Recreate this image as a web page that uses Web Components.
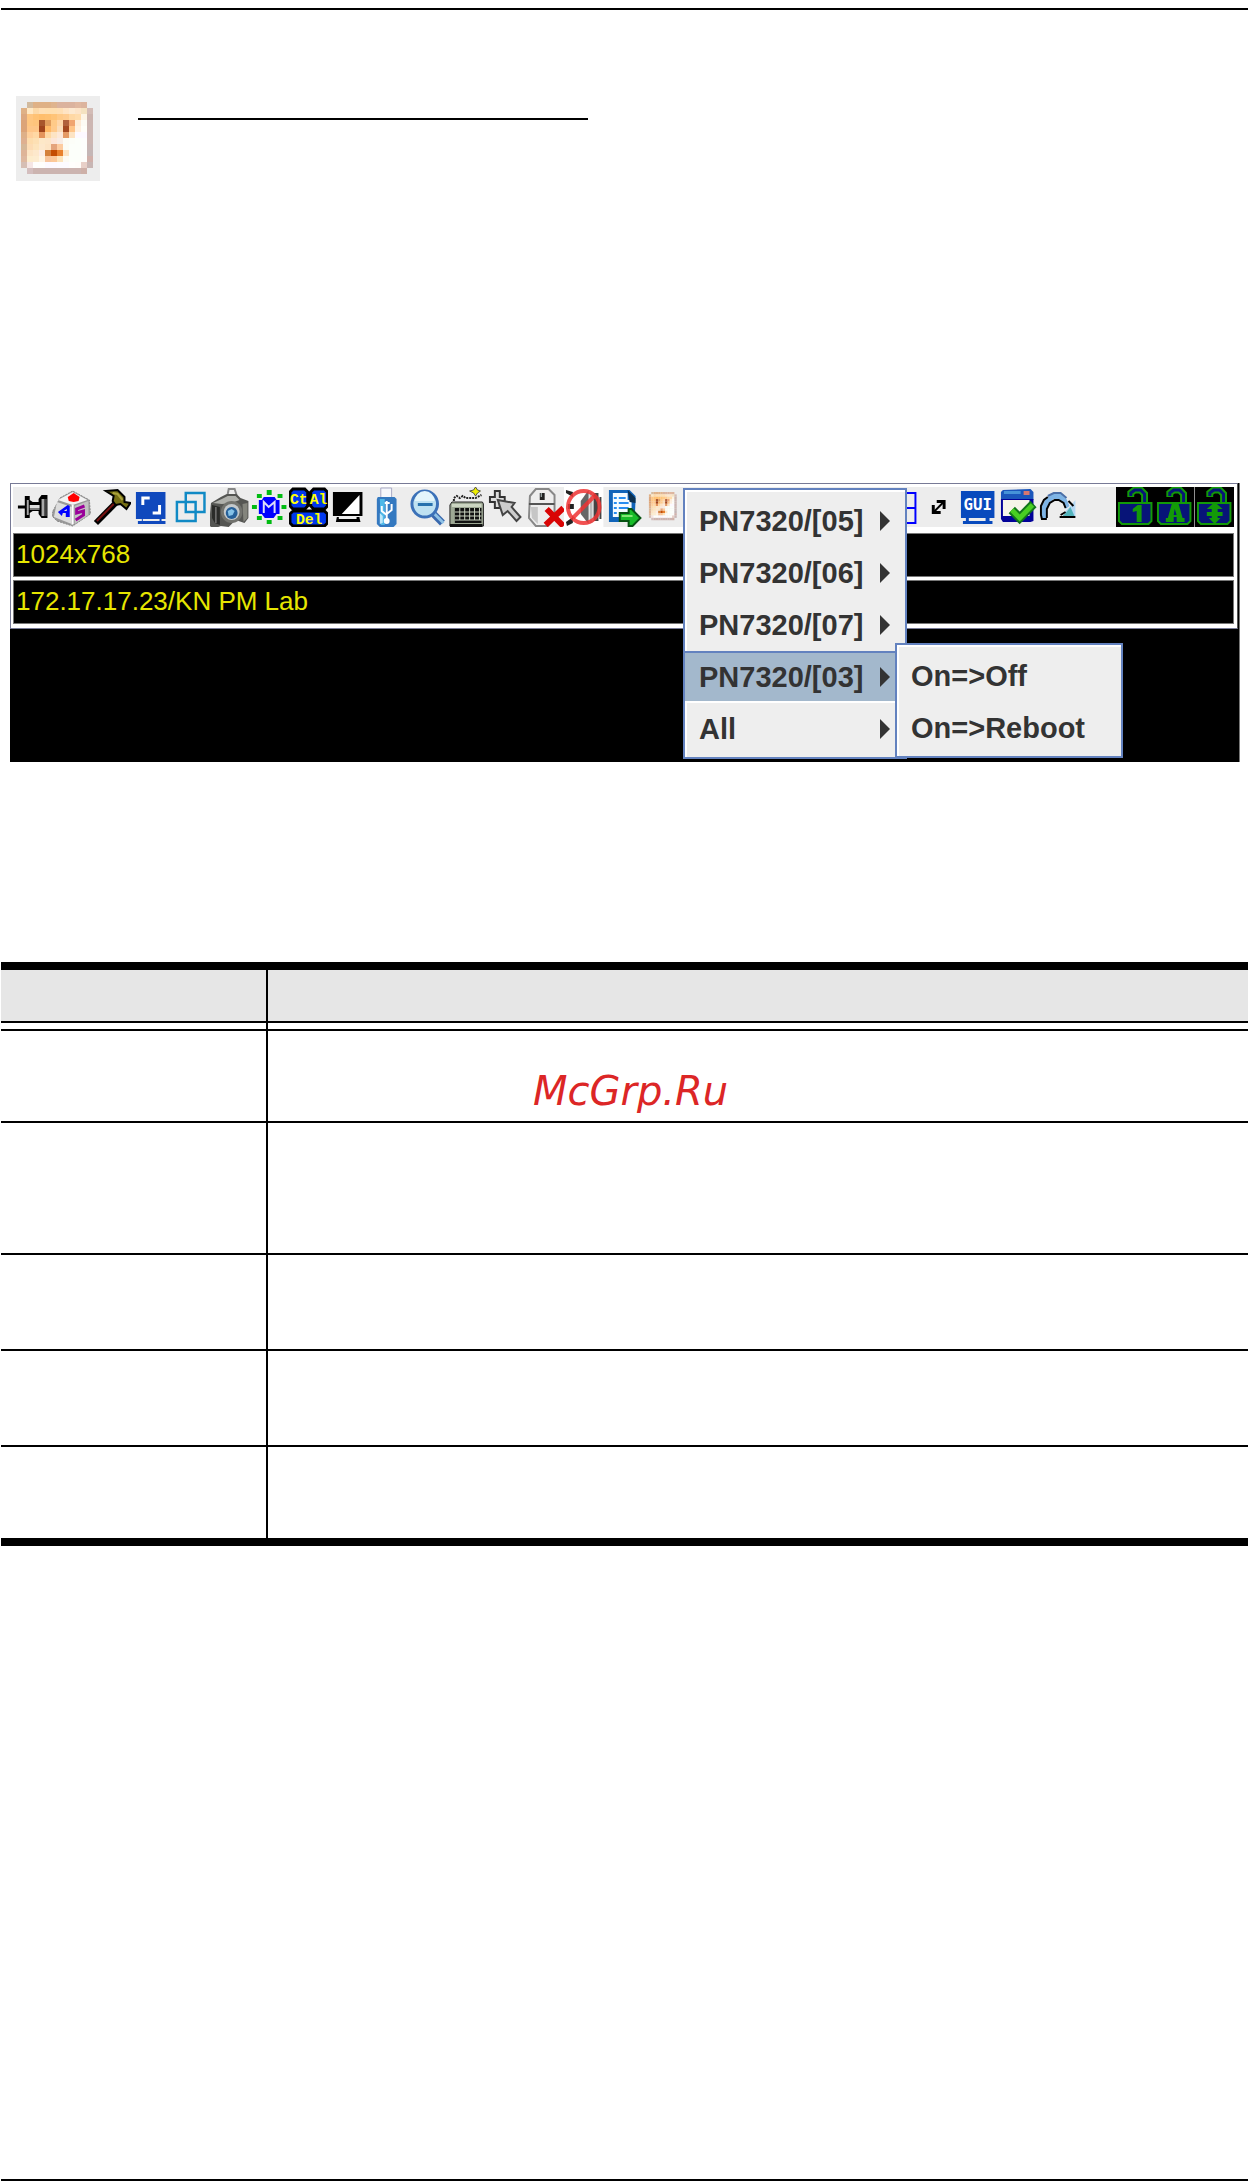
<!DOCTYPE html>
<html lang="en">
<head>
<meta charset="utf-8">
<title>Power outlet menu</title>
<style>
  body {
    margin: 0;
    background: #fff;
    font-family: "Liberation Sans", Arial, sans-serif;
  }
</style>
</head>
<body>
<manual-page></manual-page>

<script>
// 12 x 12 colour grid of the outlet icon, '' is transparent
const OUTLET = [
  ' d2ba9e dfb186 dfb186 dfb186 dfb48e dbb39e dbb39e dbb39e e0b8a0 dcb49e ',
  'dfb186 ffe8c4 fcd9a8 ffdfb4 ffdfb0 ffdfb0 ffdfb4 ffe4c4 fde9d0 fde4c8 f4e2c0 d3bcb6',
  'dca880 ffc680 ffc274 ffbe6c ffc070 ffc478 ffca88 ffcc90 ffd8a4 ffdcac fdf4e4 ccb4ae',
  'dca478 ffc680 ffc47c a8562c e09c5c ffca88 ffd6a8 b0603c f0a470 feecd8 fdfbf4 ccb6b2',
  'dca478 ffc688 ffc688 a0441c ffb866 ffca8c fbdcb8 a44820 ffc488 fff0e0 fffef8 ccb6b2',
  'deb088 ffd09c ffd8a4 e4945c ffd8a4 fde4c4 fde8d8 e49a64 fde4c4 fdf9ff fdf9ff ccb6b2',
  'deb090 fddcac fde0b4 fde8c8 fde6c8 fde6d8 f8ece4 fcfcf4 fcfef8 fcfffa fdfefc ccb6b2',
  'd6b898 fddcb4 fde4bc fde8cc fde4c4 e4a47c fdcca0 fcfcf4 fcfffa fcfffa fdfefc c8b6b4',
  'deb498 fde4c4 fde8cc fdece4 d4803c c44c00 e8802c fde4c4 fcfffa fcfffa fdfefc c4b6b6',
  'deb8a0 fdeccc fdecd0 fff4e4 f8c49c fcc898 fde4bc fdfbf4 fcfffa fcfffa fdfefc d0b0aa',
  'd6beb4 f6e6e4 fffefc fffefc fdf9ff fdf9ff fdfbff fdfbff fffefc fffdfa e8d0c8 c8b6b4',
  ' d4bebe ccb4b0 ccb4b0 ccb4b0 ccb4b0 ccb4b0 ccb4b0 ccb4b0 ccb4b0 ceb0a8 '
]

const outletCells = OUTLET.map((row, y) => row.split(' ').map((color, x) =>
  color ? `<rect x="${x}" y="${y}" width="1.02" height="1.02" fill="#${color}"/>` : ''
).join('')).join('')

const lock = (mark) => `
  <path fill="#000" d="M0 0h40v40H0z"/>
  <path fill="none" stroke="#139a08" stroke-width="7" d="M15 10V6l4-3h6l4 4v11"/>
  <path fill="none" stroke="#071478" stroke-width="3" d="M15 9V6l4-3h6l4 4v11"/>
  <path fill="#071478" stroke="#139a08" stroke-width="2" d="M3 16h33v18l-3 3H6l-3-3z"/>
  <g fill="#139a08">${mark}</g>
`

const ICONS = {
  pin: `
    <path stroke="#000" stroke-width="3" d="M5 20h9"/>
    <path fill="#000" d="M12 9h5v4l3 2h6v-3l3-4h6v23h-6l-3-4v-3h-6l-3 2v5h-5z"/>
    <path fill="#a8a8a8" d="M14 13h2v15h-2zM29 12h3v17h-3z"/>
    <path fill="#ddd" d="M17 18h10v3H17z"/>
    <path fill="#777" d="M17 21h10v2H17zM33 12h1v17h-1z"/>`,
  cube: `
    <path fill="#999" stroke="#888" stroke-dasharray="2 1" d="M1 24 8 11 21 4l17 9 1 14-18 12-16-5-5-5z"/>
    <path fill="#f2f2f2" d="m6 13 15-8 15 8-15 5z"/>
    <path fill="#ddd" d="m5 15 15 5v17L2 30z"/>
    <path fill="#fff" d="M20 18v20l2-1V18z"/>
    <path fill="#c3c3c3" d="m23 19 14-5v14l-14 9z"/>
    <path fill="#f00" d="m16 10 6-4 6 4-1 4-5 1-5-1z"/>
    <path fill="#00f" fill-rule="evenodd" d="m6 25 10-7 2 1v11h-4v-4h-3l-1 3zm6-1h3v-2z"/>
    <path fill="none" stroke="#909" stroke-width="3" d="m33 19-8 3v4l7-2v4l-8 5"/>`,
  hammer: `
    <path stroke="#000" stroke-width="6" d="M4 36 26 14"/>
    <path stroke="#711" stroke-width="2" d="M5 34 25 14"/>
    <path fill="#756e13" stroke="#000" stroke-width="2" d="m14 4 12-1 7 7v5l6 1-4 6-6-5-5 1-3-4 1-5z"/>
    <path stroke="#aaa23b" stroke-width="2" d="m21 6 5 1 5 6"/>`,
  fullscreen: `
    <path fill="#1049bd" d="M5 5h30v27h-4v2h4v3H7v-3h4v-2H5z"/>
    <path fill="#ececec" d="M12 32h17v2H12z"/>
    <path fill="none" stroke="#fff" stroke-width="3" d="M12 18v-7h7M22 26h7v-8"/>`,
  windows: `
    <path fill="none" stroke="#118ac5" stroke-width="2.5" d="M15 6h19v19H15zM6 15h19v19H6z"/>`,
  camera: `
    <path fill="none" stroke="#888" stroke-width="2" d="m18 7 1-5h6l2 6"/>
    <path fill="#555653" d="m1 16 10-6 6-3h10l4 4 8 3v17l-4 5-9-3-7 7-8-1-8 3-4-4z"/>
    <path fill="#afb0ab" d="m3 16 9-4 6-3h8l4 4-8 3-10 1z"/>
    <path fill="#2a2b29" d="m2 18 8 2v18l-5-2-3-5z"/>
    <path fill="#84857d" d="m33 17 5-1v15l-4 4z"/>
    <path stroke="#999" d="M6 20v16"/>
    <circle cx="22" cy="25" r="11" fill="#72736e"/>
    <circle cx="22" cy="25" r="8" fill="#c4c9cc"/>
    <circle cx="22" cy="26" r="6" fill="#266099"/>
    <path fill="#85c2e8" d="m18 24 4-2 3 2-2 4-4 1z"/>`,
  macro: `
    <path fill="#0b1" d="M18 3h5v5h-5zM29 7h5v4h-5zM33 18h5v4h-5zM29 29h5v4h-5zM18 33h5v4h-5zM8 29h5v4H8zM3 18h5v4H3zM8 7h5v4H8z"/>
    <path fill="#00f" d="M15 10h11l2 3h3v14h-3l-3 4h-9l-3-4h-3V13h3z"/>
    <path fill="none" stroke="#dcdcf8" stroke-width="2" d="M15 26V15l5 5 6-5v11"/>`,
  ctrlAltDel: `
    <path fill="#0038ee" stroke="#000" stroke-width="3" d="M4 2h12l3 3v14l-3 3H4l-3-3V5zM25 2h11l3 3v14l-3 3H25l-3-3V5zM4 24h32l3 3v9l-3 3H4l-3-3v-9z"/>
    <g fill="#ff0" font-family="Liberation Mono, monospace" font-weight="bold" font-size="15">
      <text x="1" y="17">Ct</text>
      <text x="21" y="17">Al</text>
      <text x="7" y="37">Del</text>
    </g>`,
  contrast: `
    <path fill="#000" d="M5 5h30v24H5zM9 30h23v1l1 4H8z"/>
    <path fill="#fff" d="M32 8v19H14z"/>
    <path fill="#eee" d="M11 30h18v2H11z"/>`,
  usb: `
    <path fill="#f5f7fb" stroke="#a8a9c5" d="M14 1h11v10H14z"/>
    <path fill="#3479c0" d="M11 10h17l2 2v25l-3 3H13l-3-3V12z"/>
    <path fill="#4eb8e8" d="M13 12h5v26h-4z"/>
    <path fill="#bde8fa" d="m13 26 3 3v7l-3 1z"/>
    <path fill="none" stroke="#fff" stroke-width="2" d="M20 14v21M15 19v5l5 4M25 17v6l-5 4M18 16h5"/>
    <circle cx="20" cy="34" r="3" fill="#fff"/>`,
  zoom: `
    <path stroke="#3968ad" stroke-width="7" d="m27 27 9 9"/>
    <path stroke="#8fc2e6" stroke-width="3" d="m27 26 10 10"/>
    <circle cx="18" cy="17" r="13" fill="#bfe2f2" stroke="#3b71b8" stroke-width="3"/>
    <path fill="#e4f5fb" d="M8 14a10 10 0 0 1 20 0z"/>
    <path fill="#2872ad" d="M11 16h15v3H11z"/>`,
  keyboard: `
    <path fill="none" stroke="#222" stroke-width="2" stroke-dasharray="2 1" d="M8 14V11l3-2 3 2 3-2 3 2h10l6-3"/>
    <path fill="#9da894" stroke="#222" d="M6 15h31l1 2v22H4V18z"/>
    <path fill="#ccd5c2" d="M6 17h30v3H6z"/>
    <path fill="#111" d="M9 21h27v15H9zM4 37h33v3H4z"/>
    <path stroke="#ccd5c2" d="M9 25h27M9 29h27M9 33h27M14 21v12M19 21v12M24 21v12M29 21v12M34 21v12"/>
    <path fill="#ee0" stroke="#554" d="m30 0 2 3 3 1-3 2-2 3-2-3-4-2 4-1z"/>`,
  pointer: `
    <path fill="#ddd" stroke="#333" stroke-width="2" d="M9 4h5v6h5v5h-5v6H9v-6H4v-5h5z"/>
    <path fill="#ccc" stroke="#444" stroke-width="2" d="m12 13 17 3-3 4 9 10-4 4-9-10-5 4z"/>`,
  mouse: `
    <path fill="#eee" stroke="#888" stroke-width="2" d="m5 9 6-7h13l6 6v23l-7 8H11l-7-8z"/>
    <path fill="#c6c6c6" d="M6 20h7v17l-6-6z"/>
    <path stroke="#555" stroke-width="2" d="M4 17h26"/>
    <path fill="#222" d="M15 6h5v7h-5z"/>
    <path fill="#bcc" d="M16 6h1v4h-1z"/>
    <path stroke="#d90505" stroke-width="6" d="m22 22 17 17M39 21 21 38"/>`,
  muted: `
    <path fill="#fff" d="M0 0h40v40H0z"/>
    <path fill="#222" d="m2 3 7 2v5L2 6zM4 17h6v5H4zM2 35l7-5v6l-6 3z"/>
    <path fill="#666" d="m17 14 8-11v34l-8-10z"/>
    <path fill="#bbb" d="M26 5h3v31h-3z"/>
    <path fill="#444" d="M30 6h5v28h-5zM36 10h2v22h-2z"/>
    <circle cx="20" cy="20" r="16" fill="none" stroke="#e33" stroke-opacity=".85" stroke-width="4"/>
    <path stroke="#e33" stroke-opacity=".85" stroke-width="4" d="M31 9 9 31"/>`,
  exportList: `
    <path fill="#1164b9" d="M5 3h21l6 6v5l-1 21H5z"/>
    <path fill="#f4fbff" d="M9 6h15v7h4v17H9z"/>
    <path fill="#0d304f" d="m24 3 8 8v5l-6-1z"/>
    <path stroke="#278df0" stroke-width="2" d="M10 11h3M15 11h7M10 16h3M15 16h10M10 21h3M15 21h10M10 26h3"/>
    <path fill="#17bc28" stroke="#075313" stroke-width="2" d="M16 26h9v-4h3l9 9-8 8h-4v-5h-9z"/>
    <path stroke="#84e875" stroke-width="2" d="M18 29h11"/>`,
  outlet: `<g transform="translate(6 5) scale(2.35)">${outletCells}</g>`,
  panels: `<path fill="none" stroke="#00f" stroke-width="2" d="M3 6h33v30H3zM3 21h33M20 6v30"/>`,
  resize: `
    <path stroke="#000" stroke-width="2" d="m15 25 10-10"/>
    <path fill="#000" d="M18 13h9v9h-3v-6h-6zM13 18h3v6h6v3h-9z"/>`,
  gui: `
    <path fill="#084abd" d="M3 4h34v27h-5v3h3v3H5v-3h3v-3H3z"/>
    <path fill="#ececec" d="M11 31h17v3H11z"/>
    <text x="20" y="23" fill="#fff" font-family="DejaVu Sans Mono, monospace" font-size="16" font-weight="bold" text-anchor="middle">GUI</text>`,
  confirm: `
    <path fill="#1b56bb" d="m5 3 28-1 3 3v8H3V5z"/>
    <path fill="#4693d8" d="M6 4h17v3H6z"/>
    <path fill="#d87770" d="M26 4h6v4h-6z"/>
    <path fill="#020299" d="M3 12h33v22l-3 1H5l-2-3z"/>
    <path fill="#f5f4e9" d="M5 13h27v16H5z"/>
    <path fill="none" stroke="#11751b" stroke-width="9" d="m14 23 8 8 14-14"/>
    <path fill="none" stroke="#48cf22" stroke-width="5" d="m14 23 8 8 13-13"/>`,
  redo: `
    <path fill="#b4d8f4" d="M39 13v16h-6l-5-4 6-6z"/>
    <path fill="#7eb4e5" d="M5 31V19l4-7 7-5h8l6 5 3 7-4 3-3-6-5-4h-4l-5 4-2 5v10z"/>
    <path fill="none" stroke="#000" stroke-width="2" d="M10 32H5l-1-4v-9l3-6 4-3M10 31v-9l3-6 5-3h4l5 3 2 5"/>
    <path stroke="#4a6fa8" stroke-width="2" d="m11 9 6-3h7l6 5"/>
    <path fill="#54b4bc" d="m34 20 4 9H26l4-4z"/>
    <path fill="none" stroke="#000" stroke-width="2" d="M23 30h16M24 28l5-3M32 14l5 5"/>`,
  numLock: lock('<path d="M17 22l5-4h4v17h-5V24l-4 1z"/>'),
  capsLock: lock('<path fill-rule="evenodd" d="M17 17h7l4 14h2v4h-8v-5h-3v5h-8v-4h2zm3 5-1 6h3z"/>'),
  scrollLock: lock('<path d="m20 15 8 7h-5v3h5v4h-5v2h3l-6 6-6-6h3v-2h-5v-4h5v-3h-5z"/>')
}

// order of the cells along the bar, an empty name leaves a blank cell
const TOOLS = [
  'pin', 'cube', 'hammer', 'fullscreen', 'windows', 'camera', 'macro', 'ctrlAltDel',
  'contrast', 'usb', 'zoom', 'keyboard', 'pointer', 'mouse', 'muted', 'exportList',
  'outlet', '', '', '', '', '', 'panels', 'resize', 'gui', 'confirm', 'redo', '',
  'numLock', 'capsLock', 'scrollLock'
]

class BaseElement extends HTMLElement {
  constructor() {
    super()
    this.attachShadow({ mode: 'open' })
  }

  connectedCallback() {
    const template = document.createElement('template')
    template.innerHTML = `<style>${this.getStyle()}</style>${this.getTemplate()}`
    this.shadowRoot.replaceChildren(template.content.cloneNode(true))
  }
}

class OutletIcon extends BaseElement {
  getTemplate() {
    return `<svg viewBox="0 0 12 12" shape-rendering="crispEdges" aria-hidden="true">${outletCells}</svg>`
  }

  getStyle() {
    return `
      :host {
        display: block;
        box-sizing: border-box;
        width: 84px;
        height: 85px;
        padding: 6px 5px;
        background: #ededed;
      }

      svg {
        display: block;
        width: 72px;
        height: 72px;
      }
    `
  }
}

class ToolBar extends BaseElement {
  getTemplate() {
    return TOOLS.map((name) => name
      ? `<button type="button" aria-label="${name}"><svg viewBox="0 0 40 40" preserveAspectRatio="none" fill="none">${ICONS[name]}</svg></button>`
      : '<span></span>'
    ).join('')
  }

  getStyle() {
    return `
      :host {
        display: grid;
        grid-template-columns: repeat(${TOOLS.length}, minmax(0, 1fr));
        height: 40px;
        background: #ededed;
      }

      button {
        display: block;
        min-width: 0;
        padding: 0;
        border: 0;
        background: none;
      }

      svg {
        display: block;
        width: 100%;
        height: 40px;
      }
    `
  }
}

class StatusLine extends BaseElement {
  getTemplate() {
    return '<slot></slot>'
  }

  getStyle() {
    return `
      :host {
        display: block;
        box-sizing: border-box;
        height: 44px;
        padding-left: 2px;
        border: 1px solid #777;
        background: #000;
        color: #e6e600;
        font-size: 26px;
        line-height: 40px;
        white-space: nowrap;
      }
    `
  }
}

class MenuEntry extends BaseElement {
  getTemplate() {
    return `
      <button type="button">
        <slot></slot>
        ${this.hasAttribute('more') ? '<i></i>' : ''}
      </button>
    `
  }

  getStyle() {
    return `
      :host {
        display: block;
      }

      button {
        display: flex;
        align-items: center;
        justify-content: space-between;
        box-sizing: border-box;
        width: 100%;
        height: 52px;
        padding: 0 15px 0 14px;
        border: 0;
        background: none;
        color: #333;
        font: bold 29px/48px "Liberation Sans", Arial, sans-serif;
        white-space: nowrap;
      }

      :host([selected]) button {
        border-top: 2px solid #6382bf;
        border-bottom: 2px solid #fff;
        background: #a3b8cc;
      }

      i {
        border: 10px solid transparent;
        border-left-color: #333;
        border-right-width: 0;
      }
    `
  }
}

class PopupMenu extends BaseElement {
  getTemplate() {
    return '<slot></slot>'
  }

  getStyle() {
    return `
      :host {
        display: block;
        box-sizing: border-box;
        padding: 5px 0 2px;
        border: 2px solid #6382bf;
        background: #eee;
        box-shadow: inset 2px 2px #fff;
      }
    `
  }
}

class RemoteScreen extends BaseElement {
  getTemplate() {
    return `
      <div class="panel">
        <tool-bar></tool-bar>
        <status-line>1024x768</status-line>
        <status-line>172.17.17.23/KN PM Lab</status-line>
      </div>
      <popup-menu class="outlets">
        <menu-entry more>PN7320/[05]</menu-entry>
        <menu-entry more>PN7320/[06]</menu-entry>
        <menu-entry more>PN7320/[07]</menu-entry>
        <menu-entry more selected>PN7320/[03]</menu-entry>
        <menu-entry more>All</menu-entry>
      </popup-menu>
      <popup-menu class="actions">
        <menu-entry>On=&gt;Off</menu-entry>
        <menu-entry>On=&gt;Reboot</menu-entry>
      </popup-menu>
    `
  }

  getStyle() {
    return `
      :host {
        display: block;
        position: relative;
        box-sizing: border-box;
        min-height: 279px;
        padding-right: 1px;
        border-right: 1px solid #777;
        background: #000;
      }

      .panel {
        padding: 3px 3px 4px 2px;
        border: 1px solid #777a96;
        border-right-color: #555;
        background: #fff;
      }

      tool-bar {
        margin-bottom: 6px;
      }

      status-line + status-line {
        margin-top: 3px;
      }

      popup-menu {
        position: absolute;
      }

      .outlets {
        top: 5px;
        left: 673px;
        width: 224px;
      }

      .actions {
        top: 160px;
        left: 885px;
        width: 228px;
      }
    `
  }
}

class OptionTable extends BaseElement {
  getTemplate() {
    return `
      <table>
        <thead>
          <tr><th></th><th></th></tr>
        </thead>
        <tbody>
          <tr><td></td><td></td></tr>
          <tr class="tall"><td></td><td></td></tr>
          <tr><td></td><td></td></tr>
          <tr><td></td><td></td></tr>
          <tr><td></td><td></td></tr>
        </tbody>
      </table>
      <slot></slot>
    `
  }

  getStyle() {
    return `
      :host {
        display: block;
        position: relative;
      }

      table {
        width: 100%;
        table-layout: fixed;
        border-spacing: 0;
        border-top: 8px solid #000;
        border-bottom: 8px solid #000;
      }

      th,
      td {
        box-sizing: border-box;
        height: 96px;
        padding: 0;
        border-bottom: 2px solid #000;
      }

      th {
        height: 61px;
        background: linear-gradient(#e6e6e6 51px, #000 51px 53px, #fff 53px);
      }

      th:first-child,
      td:first-child {
        width: 267px;
        border-right: 2px solid #000;
      }

      tbody tr:first-child td {
        height: 92px;
      }

      tbody .tall td {
        height: 132px;
      }

      tbody tr:last-child td {
        height: 91px;
        border-bottom: 0;
      }

      ::slotted(*) {
        position: absolute;
        top: 105px;
        left: 532px;
        color: #dc2626;
        font: italic 40px/48px "DejaVu Sans", sans-serif;
      }
    `
  }
}

class ManualPage extends BaseElement {
  getTemplate() {
    return `
      <hr>
      <header>
        <outlet-icon></outlet-icon>
        <hr>
      </header>
      <remote-screen></remote-screen>
      <option-table><span>McGrp.Ru</span></option-table>
      <hr class="end">
    `
  }

  getStyle() {
    return `
      :host {
        display: flex;
        flex-direction: column;
        box-sizing: border-box;
        min-height: 100vh;
        padding: 8px 1px 0;
      }

      hr {
        width: 100%;
        height: 2px;
        margin: 0;
        border: 0;
        background: #000;
      }

      header {
        display: flex;
        gap: 38px;
        margin: 86px 15px 0;
      }

      header hr {
        width: 450px;
        margin-top: 22px;
      }

      remote-screen {
        margin: 302px 8px 0 9px;
      }

      option-table {
        margin-top: 200px;
      }

      .end {
        margin-top: auto;
      }
    `
  }
}

customElements.define('outlet-icon', OutletIcon)
customElements.define('tool-bar', ToolBar)
customElements.define('status-line', StatusLine)
customElements.define('menu-entry', MenuEntry)
customElements.define('popup-menu', PopupMenu)
customElements.define('remote-screen', RemoteScreen)
customElements.define('option-table', OptionTable)
customElements.define('manual-page', ManualPage)
</script>
</body>
</html>
